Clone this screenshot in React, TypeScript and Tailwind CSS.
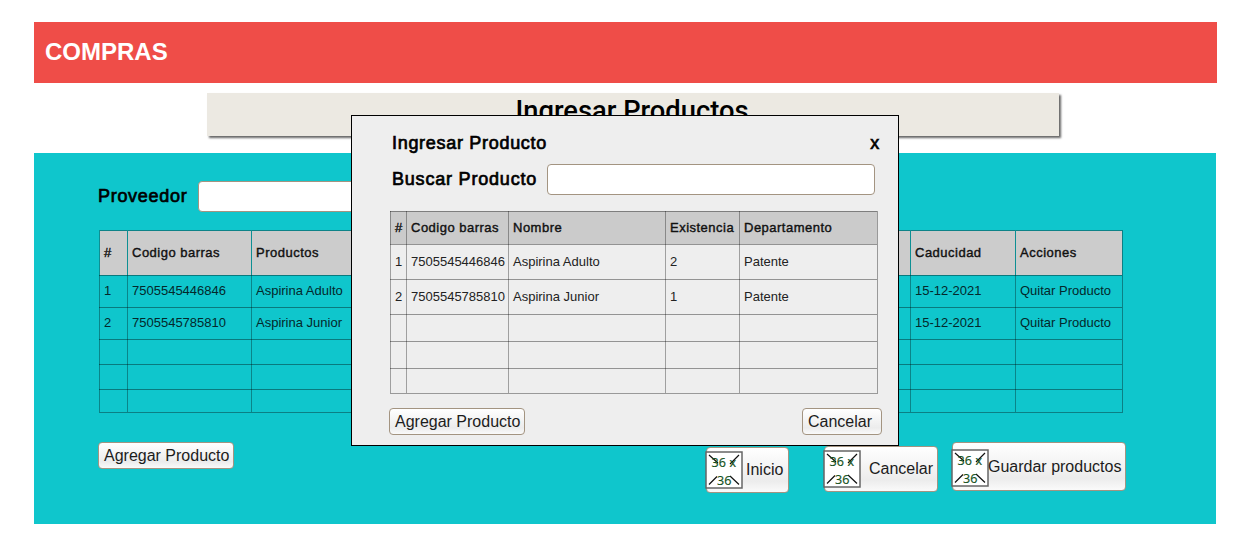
import type { ReactNode } from 'react';

const LINES =
  'shadow-[inset_1px_0_0_rgba(0,0,0,0.33),inset_0_1px_0_rgba(0,0,0,0.38)]';

const TEAL_LINES =
  'shadow-[inset_1px_0_0_#0e8f93,inset_0_1px_0_#0e8388]';

const LABEL =
  'text-lg leading-none text-black [-webkit-text-stroke:0.7px_#000]';

const HEADING = 'tracking-[0.49px] text-[#111] [-webkit-text-stroke:0.4px_#111]';

const button =
  'flex shrink-0 items-center whitespace-nowrap rounded border border-[#a39481] bg-linear-to-b from-white via-[#ececec] via-75% to-[#fafafa] text-base leading-none text-[#1c1c1c]';

function Placeholder({ className = '' }: { className?: string }) {
  return (
    <svg
      width="38"
      height="38"
      viewBox="0 0 38 38"
      className={`shrink-0 ${className}`}
    >
      <rect x="1" y="1" width="36" height="36" fill="#fff" stroke="#666" strokeWidth="1.5" />
      <path
        d="M4 4l9 8M34 4l-9 9M4 33.5l8-8M34 33.5l-9-8.500"
        fill="none"
        stroke="#111"
        strokeWidth="1.2"
      />
      <g fill="#12501a" fontFamily="'Open Sans', sans-serif" fontSize="12.500" stroke="#12501a" strokeWidth="0.2">
        <text x="6.500" y="16">36</text>
        <text x="24.500" y="16">x</text>
        <text x="12" y="33.500">36</text>
      </g>
    </svg>
  );
}

function Cell({ children, className }: { children?: ReactNode; className: string }) {
  return (
    <div className={`flex items-center whitespace-nowrap pl-[5px] text-[13px] leading-none ${className}`}>
      {children}
    </div>
  );
}

const purchases = [
  ['1', '7505545446846', 'Aspirina Adulto', '15-12-2021', 'Quitar Producto'],
  ['2', '7505545785810', 'Aspirina Junior', '15-12-2021', 'Quitar Producto'],
  ['', '', '', '', ''],
  ['', '', '', '', ''],
  ['', '', '', '', ''],
];

const results = [
  ['1', '7505545446846', 'Aspirina Adulto', '2', 'Patente'],
  ['2', '7505545785810', 'Aspirina Junior', '1', 'Patente'],
  ['', '', '', '', ''],
  ['', '', '', '', ''],
  ['', '', '', '', ''],
];

function PurchaseTable() {
  return (
    <div className="grid w-[1024px] grid-cols-[28px_124px_659px_105px_107px] grid-rows-[45px_32px_32px_25px_25px_23px] border-r border-b border-[#0b8085]">
      {['#', 'Codigo barras', 'Productos', 'Caducidad', 'Acciones'].map((h) => (
        <Cell key={h} className={`bg-[#cccccc] ${HEADING} ${TEAL_LINES}`}>
          {h}
        </Cell>
      ))}
      {purchases.flatMap((row, r) =>
        row.map((value, c) => (
          <Cell key={`${r}-${c}`} className={`pb-px text-[#04282b] ${LINES}`}>
            {value}
          </Cell>
        )),
      )}
    </div>
  );
}

function ResultTable() {
  return (
    <div className="grid w-[488px] grid-cols-[16px_102px_157px_74px_138px] grid-rows-[33px_35px_35px_27px_27px_25px] border-r border-b border-[#999]">
      {['#', 'Codigo barras', 'Nombre', 'Existencia', 'Departamento'].map((h) => (
        <Cell key={h} className={`bg-[#cbcbcb] ${HEADING} ${LINES}`}>
          {h}
        </Cell>
      ))}
      {results.flatMap((row, r) =>
        row.map((value, c) => (
          <Cell key={`${r}-${c}`} className={`text-[#222] ${LINES}`}>
            {value}
          </Cell>
        )),
      )}
    </div>
  );
}

function ProductDialog() {
  return (
    <div className="absolute top-[115px] left-[351px] h-[331px] w-[548px] border border-black bg-[#eeeeee] pl-[37px] text-black">
      <div className={`flex h-12 items-center justify-between pt-1.5 pr-[18px] pl-[3px] tracking-[0.7px] ${LABEL}`}>
        <span>Ingresar Producto</span>
        <span>x</span>
      </div>
      <div className="flex items-center pl-[3px]">
        <span className={`w-[155px] pb-0.5 tracking-[0.8px] ${LABEL}`}>Buscar Producto</span>
        <div className="h-[31px] w-[328px] rounded border border-[#a39481] bg-white" />
      </div>
      <div className="mt-4 pl-px">
        <ResultTable />
      </div>
      <div className="mt-3.5 flex w-[493px] justify-between">
        <button className={`${button} h-[27px] w-[136px] pl-[5px]`}>Agregar Producto</button>
        <button className={`${button} h-[27px] w-[80px] pl-[5px]`}>Cancelar</button>
      </div>
    </div>
  );
}

export default function App() {
  return (
    <div className="relative h-[545px] w-[1250px] overflow-hidden bg-white pt-[22px] pl-[34px] font-['Liberation_Sans',Arial,sans-serif]">
      <header className="flex h-[61px] w-[1183px] items-center bg-[#ef4d48] pb-0.5 pl-[11px] text-2xl font-bold text-white">
        COMPRAS
      </header>
      <h1 className="mt-2.5 ml-[173px] h-[43px] w-[852px] bg-[#ece9e2] pr-0.5 text-center font-['Roboto',sans-serif] text-[27.300px] leading-[37px] font-medium text-black shadow-[2px_2px_2px_rgba(0,0,0,0.6)]">
        Ingresar Productos
      </h1>
      <main className="mt-[17px] h-[371px] w-[1182px] bg-[#0fc6cc] pt-7 pl-16">
        <div className="flex items-center">
          <span className={`w-[100px] pb-0.5 tracking-[0.7px] ${LABEL}`}>Proveedor</span>
          <div className="h-[31px] w-[328px] rounded border border-[#a39481] bg-white" />
        </div>
        <div className="mt-[18px] pl-px">
          <PurchaseTable />
        </div>
        <div className="mt-[29px] flex items-start">
          <button className={`${button} h-[27px] w-[136px] pl-[5px]`}>Agregar Producto</button>
          <button className={`${button} mt-[5px] ml-[472px] h-[46px] w-[83px]`}>
            <Placeholder className="-ml-[2px]" />
            <span className="ml-[3px]">Inicio</span>
          </button>
          <button className={`${button} mt-1 ml-[35px] h-[46px] w-[114px]`}>
            <Placeholder className="-ml-[2px]" />
            <span className="ml-2">Cancelar</span>
          </button>
          <button className={`${button} ml-3.5 h-[49px] w-[174px]`}>
            <Placeholder className="-ml-[2px] mt-0.5" />
            <span className="-ml-px">Guardar productos</span>
          </button>
        </div>
      </main>
      <ProductDialog />
    </div>
  );
}
